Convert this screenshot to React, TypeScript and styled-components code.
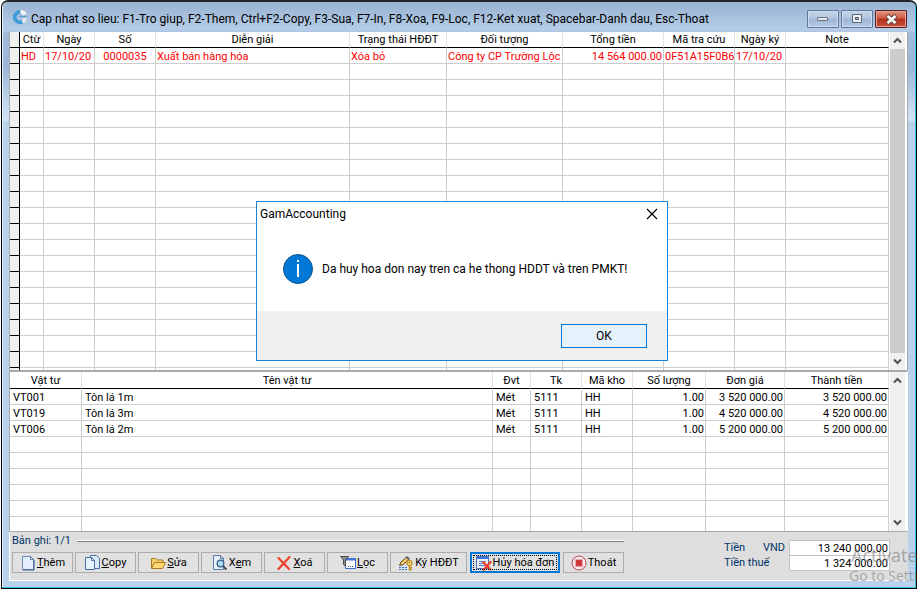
import React from 'react';
import styled, { createGlobalStyle } from 'styled-components';

const UI = 'Roboto, "Liberation Sans", Arial, sans-serif';
const MARK = '"Open Sans", "Noto Sans", sans-serif';

const Global = createGlobalStyle`
  *, *::before, *::after { box-sizing: border-box; }
  body { margin: 0; background: #fff; color: #000; font: 11px/15px ${UI}; overflow: hidden; }
  button, input { font: inherit; color: inherit; margin: 0; }
`;

const Page = styled.main`
  height: 100vh;
  padding: 0 1px 1px;
`;

const Frame = styled.section`
  display: flex;
  flex-direction: column;
  height: 100%;
  padding: 0 8px 7px 7px;
  border: 1px solid #000;
  border-top: 2px solid #23252b;
  border-radius: 7px 7px 0 0;
  background: linear-gradient(#98b2d2, #b5cde7 28px, #a0badb 32px, #9bb7d8 65px, #d3e3f4 118px, #b9d1ea 120px);
  box-shadow: inset -1px -1px 0 #35c3e6, inset 1px 0 0 #e8f2fb;
`;

const TitleBar = styled.header`
  display: flex;
  align-items: center;
  flex: none;
  height: 30px;
  padding: 0 1px 0 3px;
  gap: 3px;
`;

const Title = styled.h1`
  flex: 1;
  margin: 0;
  padding-top: 4px;
  font: 400 12px/20px ${UI};
  white-space: nowrap;
`;

const WindowButtons = styled.div`
  display: flex;
  align-self: flex-start;
  gap: 2px;
  padding-top: 8px;
`;

const WindowButton = styled.button<{ $close?: boolean }>`
  display: grid;
  place-items: center;
  width: 32px;
  height: 18px;
  padding: 0;
  border: 1px solid ${p => (p.$close ? '#5b1e1e' : '#5f7897')};
  border-radius: 1px;
  box-shadow: inset 0 0 0 1px ${p => (p.$close ? '#e7a494' : '#cfdeef')};
  background: ${p => (p.$close
    ? 'linear-gradient(#e0937f, #cf5b42 45%, #b3301a 50%, #c9513a)'
    : 'linear-gradient(#c3d4e8, #b2c7e0 45%, #9db6d3 50%, #b5cbe4)')};
`;

const Client = styled.div`
  display: flex;
  flex-direction: column;
  flex: 1;
  min-height: 0;
  background: #dedede;
`;

const Pane = styled.div<{ $fill?: boolean }>`
  display: flex;
  flex: ${p => (p.$fill ? '1 1 0' : '0 0 162px')};
  min-height: 0;
  overflow: hidden;
  background: #fff;
  border: solid #a9a9ad;
  border-width: ${p => (p.$fill ? '0 1px' : '2px 1px 1px')};
  border-right-color: ${p => (p.$fill ? '#a9a9ad' : '#fff')};
`;

const TableClip = styled.div`
  flex: 1;
  min-width: 0;
  overflow: hidden;
`;

const Grid = styled.table`
  width: 100%;
  table-layout: fixed;
  border-collapse: separate;
  border-spacing: 0;
`;

const Head = styled.th<{ $tall?: boolean }>`
  height: ${p => (p.$tall ? '17px' : '16px')};
  padding: 1px 0 0;
  overflow: hidden;
  border-right: 1px solid #e2e2e2;
  border-bottom: 1px solid #000;
  font-weight: 400;
  line-height: 14px;
  white-space: nowrap;
`;

const Cell = styled.td<{ $align?: string; $red?: boolean }>`
  height: 16px;
  padding-top: 2px;
  padding-bottom: 0;
  padding-left: ${p => (p.$red ? '1px' : '3px')};
  padding-right: ${p => (p.$align ? '1px' : '0')};
  overflow: hidden;
  border-right: 1px solid #cdcdcd;
  border-bottom: 1px solid #cdcdcd;
  color: ${p => (p.$red ? '#f00' : '#000')};
  line-height: 13px;
  text-align: ${p => p.$align || 'left'};
  white-space: nowrap;
`;

const Selector = styled.td`
  height: 16px;
  padding: 0;
  border-right: 1px solid #000;
  border-bottom: 1px solid #000;
  background: #f0f0f0;
`;

const ScrollBar = styled.div`
  display: flex;
  flex-direction: column;
  flex: none;
  width: 15px;
  margin: 0 2px 0 1px;
  background: #f0f0f0;
`;

const ScrollButton = styled.button`
  display: grid;
  place-items: center;
  flex: none;
  height: 17px;
  padding: 0;
  border: 0;
  background: #f0f0f0;
`;

const Thumb = styled.div<{ $on?: boolean }>`
  flex: 1;
  background: ${p => (p.$on ? '#cdcdcd' : '#f0f0f0')};
`;

const Footer = styled.footer`
  display: flex;
  flex: none;
  justify-content: space-between;
  height: 49px;
  padding: 0 18px 0 2px;
  border: solid #fff;
  border-width: 0 0 1px 1px;
`;

const Actions = styled.div`
  display: flex;
  flex-direction: column;
`;

const Record = styled.div`
  display: flex;
  align-items: center;
  gap: 6px;
  height: 17px;
  color: #003468;
  &::after {
    content: '';
    flex: 1;
    height: 2px;
    border-top: 1px solid #fff;
    background: #808080;
  }
`;

const Buttons = styled.div`
  display: flex;
  align-items: center;
  gap: 2px;
  padding-top: 3px;
`;

const Action = styled.button<{ $wide?: boolean; $active?: boolean }>`
  display: flex;
  align-items: center;
  justify-content: center;
  gap: 1px;
  width: ${p => (p.$active ? '90px' : p.$wide ? '77px' : '61px')};
  height: 21px;
  margin: ${p => (p.$active ? '0 1px' : '0')};
  padding: 0;
  border: ${p => (p.$active ? '2px solid #0078d7' : '1px solid #adadad')};
  background: #e1e1e1;
  white-space: nowrap;
  outline: ${p => (p.$active ? '1px dotted #000' : 'none')};
  outline-offset: -4px;
  svg { flex: none; }
`;

const Totals = styled.div`
  display: grid;
  grid-template-columns: 65px 101px;
  grid-template-rows: 15px 16px;
  align-content: start;
  padding-top: 8px;
  color: #003468;
`;

const TotalLabel = styled.label`
  display: flex;
  justify-content: space-between;
  padding-right: 4px;
  white-space: nowrap;
`;

const TotalField = styled.input`
  width: 100%;
  height: 100%;
  padding: 0 1px;
  border: 1px solid #c3c3c3;
  border-bottom-width: 0;
  background: #fff;
  color: #000;
  text-align: right;
  &:last-child { border-bottom-width: 1px; }
`;

const Dialog = styled.div`
  position: absolute;
  left: 50%;
  top: 201px;
  display: flex;
  flex-direction: column;
  width: 412px;
  height: 160px;
  margin-left: -203px;
  border: 1px solid #1883d7;
  background: #fff;
  font: 12px/16px ${UI};
`;

const DialogTitle = styled.div`
  display: flex;
  align-items: center;
  justify-content: space-between;
  height: 24px;
  padding: 0 9px 0 3px;
`;

const DialogClose = styled.button`
  display: grid;
  padding: 0;
  border: 0;
  background: none;
`;

const Message = styled.div`
  display: flex;
  align-items: center;
  flex: 1;
  gap: 9px;
  padding: 0 0 0 26px;
  white-space: nowrap;
`;

const DialogFooter = styled.div`
  display: flex;
  align-items: center;
  justify-content: flex-end;
  height: 49px;
  padding: 0 20px;
  background: #f0f0f0;
`;

const OkButton = styled.button`
  width: 86px;
  height: 24px;
  padding: 0;
  border: 1px solid #0078d7;
  background: #e5f1fb;
`;

const Watermark = styled.div`
  position: absolute;
  right: 0;
  bottom: 5px;
  width: 69px;
  color: rgba(125, 125, 125, 0.6);
  font: 14px/18px ${MARK};
  white-space: nowrap;
  pointer-events: none;
`;

const WatermarkTitle = styled.div`
  padding-left: 2px;
  font-size: 18px;
  line-height: 24px;
`;

const Logo = () => (
  <svg width="16" height="16" viewBox="0 0 16 16" fill="none">
    <path d="M8.500 3A5.200 5.200 0 1 0 11 12.400" stroke="#3f9bd9" strokeWidth="3.800" />
    <path d="M8.500 2.800a5 5 0 0 1 4.500 3" stroke="#f4f6f8" strokeWidth="3.600" />
    <path d="M13.300 8.800a5 5 0 0 1-3 4" stroke="#e4e9ee" strokeWidth="3.600" />
    <path d="M7 7.500h7.500" stroke="#5d9ccf" strokeWidth="1.400" />
  </svg>
);

const Chevron = ({ down }: { down?: boolean }) => (
  <svg width="9" height="7" viewBox="0 0 9 7">
    <path d={down ? 'M1 1.5 4.5 5 8 1.5' : 'M1 5.5 4.5 2 8 5.5'} fill="none" stroke="#505050" strokeWidth="2" />
  </svg>
);

const Sheet = () => (
  <>
    <path d="M2.500 1.500h8l3 3v10h-11z" fill="#e3edfc" stroke="#6d88b2" />
    <path d="M10.500 1.500v3h3z" fill="#fff" stroke="#5d7ba8" />
    <path d="M3 15h11V5" stroke="#3d5a8c" />
  </>
);

const icons: Record<string, React.ReactNode> = {
  add: <Sheet />,
  copy: (
    <>
      <path d="M5.500 .5h6l3 3v10h-9z" fill="#dce9fb" stroke="#4c6ea4" />
      <path d="M.5 2.500h6l3 3v9h-9z" fill="#e9f2ff" stroke="#4c6ea4" />
      <path d="M6.500 2.500v3h3z" fill="#fff" stroke="#4c6ea4" />
    </>
  ),
  edit: (
    <>
      <path d="M1.500 13V3.500h4l1.500 1.500h6v3" fill="#f4cf6a" stroke="#a8791f" />
      <path d="M1.500 13.500 4.500 7.500h11l-3 6z" fill="#ffd978" stroke="#a8791f" />
    </>
  ),
  view: (
    <>
      <path d="M1.500 .5h7l3 3v11h-10z" fill="#e6effc" stroke="#5d7ba8" />
      <path d="M8.500 .5v3h3z" fill="#fff" stroke="#5d7ba8" />
      <path d="m11 11 3.500 3.500" stroke="#3f4e63" strokeWidth="2.200" />
      <circle cx="8.500" cy="8.500" r="3.300" fill="#a9dcf2" stroke="#3c5d84" strokeWidth="1.300" />
    </>
  ),
  remove: <path d="M2.500 3 13 14M13.500 2 2.500 14" stroke="#f0402a" strokeWidth="2.200" strokeLinecap="round" fill="none" />,
  filter: (
    <>
      <path d="M5.500 3.500h10v10h-10z" fill="#fff" stroke="#3e6fc4" />
      <path d="M5.500 3h10v2.500h-10z" fill="#3e74d8" />
      <path d="M8 11.500h6" stroke="#2c4f91" strokeDasharray="1 1" />
      <path d="M.5 1.500h8L5.500 5v6l-2-1.500V5z" fill="#8d9196" stroke="#4a4d50" />
    </>
  ),
  sign: (
    <>
      <path d="M1 12.500h8M1 14.500h8" stroke="#2d7ce0" strokeDasharray="2 1" />
      <path d="M1.500 10.500 3 7l5.500-5 2.500 2.500L5.500 9.500z" fill="#f3c264" stroke="#5e4a26" />
      <path d="m7.500 2.500 1.500-1.500L12 3.500 10.500 5z" fill="#5f646b" />
      <circle cx="11.500" cy="8" r="2.700" fill="#ffe06c" stroke="#a67a16" />
      <path d="M11.500 10.500V15.500M12 12.500h2M12 14.500h2" stroke="#c2921c" strokeWidth="1.600" />
      <circle cx="11.500" cy="7.500" r=".8" fill="#7a5a10" />
    </>
  ),
  cancel: (
    <>
      <path d="M.5 1.500h12v12H.5z" fill="#eaf1fc" stroke="#4670b8" />
      <path d="M.5 1.500h12v2.500H.5z" fill="#3e74d8" />
      <path d="M3 6.500h7M3 8.500h5M3 10.500h6" stroke="#5a7fbe" />
      <path d="m7.500 7.500 7 7M14.500 7l-7 8" stroke="#f0402a" strokeWidth="2.200" strokeLinecap="round" />
    </>
  ),
  exit: (
    <>
      <circle cx="8" cy="8" r="7" fill="#f6eaea" stroke="#b5474e" />
      <path d="M4.500 4.500h7v7h-7z" fill="#d2363f" stroke="#eda4a8" />
    </>
  ),
};

const Icon = ({ name }: { name: string }) => (
  <svg width="16" height="16" viewBox="0 0 16 16" fill="none" aria-hidden="true">{icons[name]}</svg>
);

type Column = { title: string; width?: number; align?: string };

const invoiceColumns: Column[] = [
  { title: 'Ctừ', width: 24 },
  { title: 'Ngày', width: 51 },
  { title: 'Số', width: 61, align: 'center' },
  { title: 'Diễn giải' },
  { title: 'Trạng thái HĐĐT', width: 97 },
  { title: 'Đối tượng', width: 116 },
  { title: 'Tổng tiền', width: 101, align: 'right' },
  { title: 'Mã tra cứu', width: 71 },
  { title: 'Ngày ký', width: 51 },
  { title: 'Note', width: 103 },
];

const invoices = [
  ['HD', '17/10/20', '0000035', 'Xuất bán hàng hóa', 'Xóa bỏ', 'Công ty CP Trường Lộc', '14 564 000.00', '0F51A15F0B6', '17/10/20', ''],
];

const itemColumns: Column[] = [
  { title: 'Vật tư', width: 72 },
  { title: 'Tên vật tư' },
  { title: 'Đvt', width: 38 },
  { title: 'Tk', width: 51 },
  { title: 'Mã kho', width: 51 },
  { title: 'Số lượng', width: 73, align: 'right' },
  { title: 'Đơn giá', width: 79, align: 'right' },
  { title: 'Thành tiền', width: 104, align: 'right' },
];

const items = [
  ['VT001', 'Tôn lá 1m', 'Mét', '5111', 'HH', '1.00', '3 520 000.00', '3 520 000.00'],
  ['VT019', 'Tôn lá 3m', 'Mét', '5111', 'HH', '1.00', '4 520 000.00', '4 520 000.00'],
  ['VT006', 'Tôn lá 2m', 'Mét', '5111', 'HH', '1.00', '5 200 000.00', '5 200 000.00'],
];

type SheetProps = { columns: Column[]; rows: string[][]; total: number; selector?: boolean; red?: boolean };

const DataGrid = ({ columns, rows, total, selector, red }: SheetProps) => (
  <TableClip>
    <Grid>
      <colgroup>
        {selector && <col width={10} />}
        {columns.map(c => <col key={c.title} width={c.width} />)}
      </colgroup>
      <thead>
        <tr>
          {selector && <Selector as="th" />}
          {columns.map(c => <Head key={c.title} $tall={!selector}>{c.title}</Head>)}
        </tr>
      </thead>
      <tbody>
        {Array.from({ length: total }, (_, r) => (
          <tr key={r}>
            {selector && <Selector />}
            {columns.map((c, i) => (
              <Cell key={c.title} $align={c.align} $red={red}>{rows[r]?.[i]}</Cell>
            ))}
          </tr>
        ))}
      </tbody>
    </Grid>
  </TableClip>
);

const Scroll = ({ thumb }: { thumb?: boolean }) => (
  <ScrollBar>
    <ScrollButton aria-label="Scroll up"><Chevron /></ScrollButton>
    <Thumb $on={thumb} />
    <ScrollButton aria-label="Scroll down"><Chevron down /></ScrollButton>
  </ScrollBar>
);

export default function App() {
  return (
    <Page>
      <Global />
      <Frame>
        <TitleBar>
          <Logo />
          <Title>Cap nhat so lieu: F1-Tro giup, F2-Them, Ctrl+F2-Copy, F3-Sua, F7-In, F8-Xoa, F9-Loc, F12-Ket xuat, Spacebar-Danh dau, Esc-Thoat</Title>
          <WindowButtons>
            <WindowButton aria-label="Minimize">
              <svg width="12" height="6"><path d="M.5 1.500h10v3H.5z" fill="#e6e6e6" stroke="#6c7480" /></svg>
            </WindowButton>
            <WindowButton aria-label="Restore">
              <svg width="12" height="10"><path d="M1.500 .5h9v8h-9z" fill="#f0f0f0" stroke="#5c6676" /><path d="M4.500 3.500h3v2h-3z" fill="#a8bdd6" stroke="#4c5563" /></svg>
            </WindowButton>
            <WindowButton $close aria-label="Close">
              <svg width="13" height="11"><path d="m2 1.500 9 8M11 1.500l-9 8" stroke="#6b4a48" strokeWidth="4.500" /><path d="m2.500 2 8 7M10.500 2l-8 7" stroke="#fff" strokeWidth="2.500" /></svg>
            </WindowButton>
          </WindowButtons>
        </TitleBar>
        <Client>
          <Pane $fill>
            <DataGrid columns={invoiceColumns} rows={invoices} total={26} selector red />
            <Scroll thumb />
          </Pane>
          <Pane>
            <DataGrid columns={itemColumns} rows={items} total={10} />
            <Scroll />
          </Pane>
          <Footer>
            <Actions>
              <Record>Bản ghi: 1/1</Record>
              <Buttons>
                <Action><Icon name="add" /><span><u>T</u>hêm</span></Action>
                <Action><Icon name="copy" /><span><u>C</u>opy</span></Action>
                <Action><Icon name="edit" /><span><u>S</u>ửa</span></Action>
                <Action><Icon name="view" /><span>X<u>e</u>m</span></Action>
                <Action><Icon name="remove" /><span><u>X</u>oá</span></Action>
                <Action><Icon name="filter" /><span><u>L</u>ọc</span></Action>
                <Action $wide><Icon name="sign" /><span>Ký HĐĐT</span></Action>
                <Action $active><Icon name="cancel" /><span>Hủy hóa đơn</span></Action>
                <Action><Icon name="exit" /><span>Thoát</span></Action>
              </Buttons>
            </Actions>
            <Totals>
              <TotalLabel htmlFor="amount"><span>Tiền</span><span>VND</span></TotalLabel>
              <TotalField id="amount" defaultValue="13 240 000.00" />
              <TotalLabel htmlFor="tax">Tiền thuế</TotalLabel>
              <TotalField id="tax" defaultValue="1 324 000.00" />
            </Totals>
          </Footer>
        </Client>
      </Frame>
      <Dialog role="dialog" aria-label="GamAccounting">
        <DialogTitle>
          GamAccounting
          <DialogClose aria-label="Close">
            <svg width="12" height="12"><path d="m1 1 10 10M11 1 1 11" stroke="#000" strokeWidth="1.200" /></svg>
          </DialogClose>
        </DialogTitle>
        <Message>
          <svg width="30" height="30" viewBox="0 0 30 30">
            <circle cx="15" cy="15" r="14.500" fill="#0078d7" stroke="#0b4f86" />
            <path d="M14 6h2v2h-2zM14 10h2v13h-2z" fill="#fff" />
          </svg>
          Da huy hoa don nay tren ca he thong HDDT và tren PMKT!
        </Message>
        <DialogFooter><OkButton>OK</OkButton></DialogFooter>
      </Dialog>
      <Watermark aria-hidden="true">
        <WatermarkTitle>Activate</WatermarkTitle>
        Go to Setti
      </Watermark>
    </Page>
  );
}
